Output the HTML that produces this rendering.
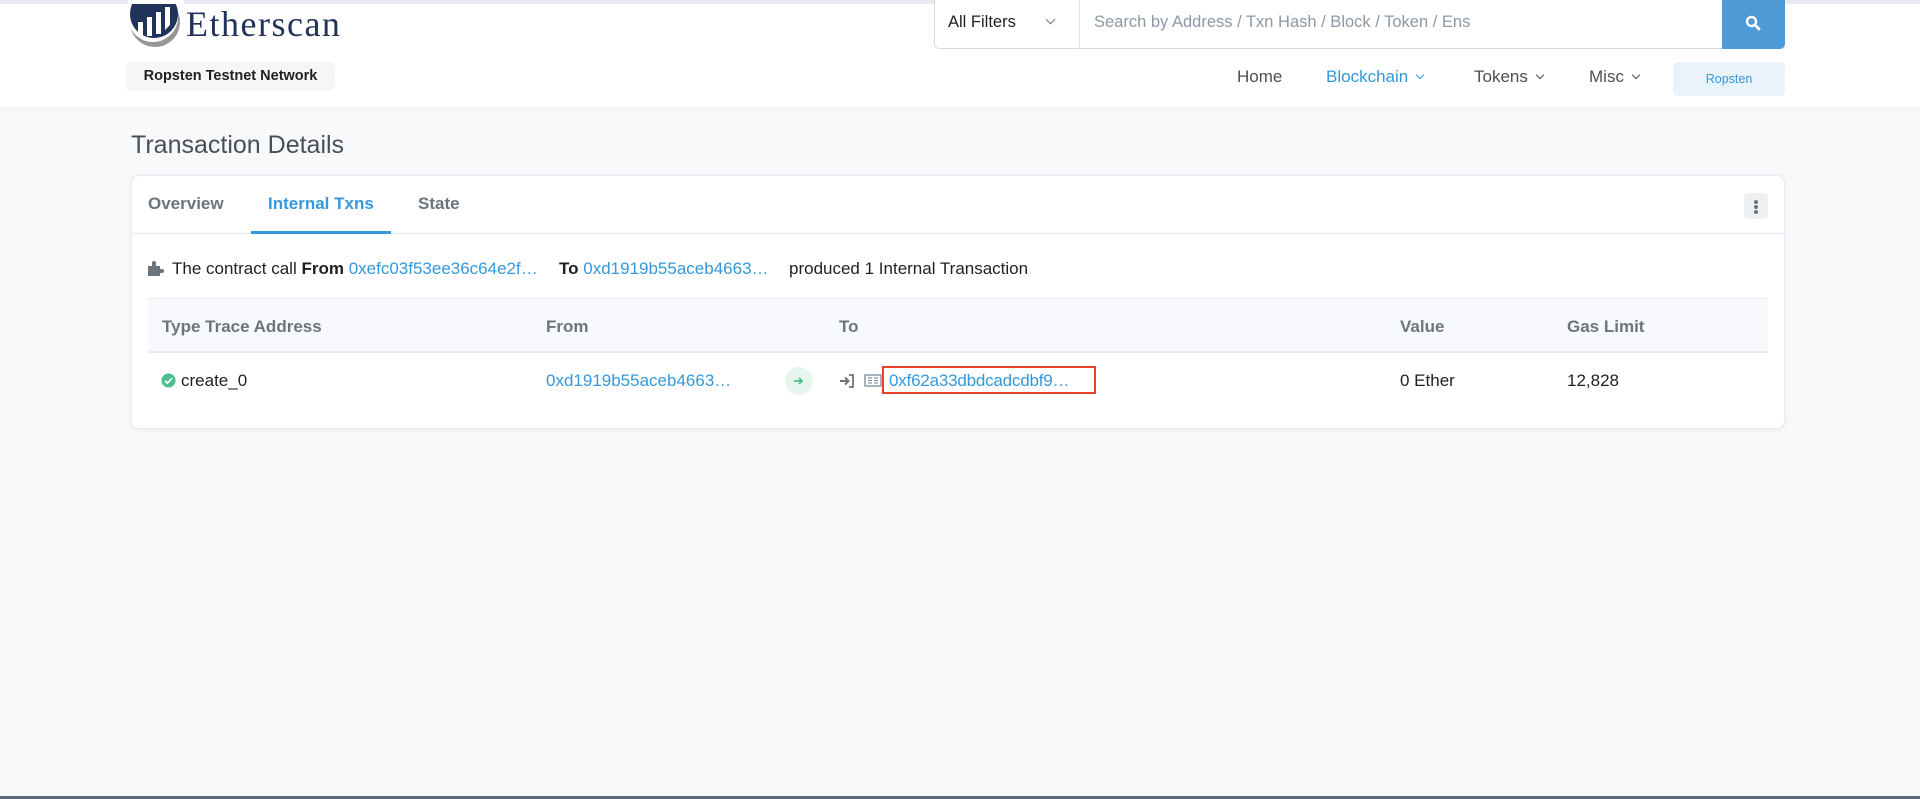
<!DOCTYPE html>
<html><head><meta charset="utf-8"><style>
*{box-sizing:border-box;margin:0;padding:0}
body{width:1920px;height:799px;overflow:hidden;background:#f8f9fa;font-family:"Liberation Sans",Arial,sans-serif;color:#1e2022;position:relative}
.a{position:absolute}
a,.lk{color:#3498db;text-decoration:none}
header{position:absolute;left:0;top:0;width:1920px;height:107px;background:#fff;border-top:4px solid #e7eaf0;box-shadow:0 1px 8px rgba(0,0,0,.04)}
.nav{font-size:17px;color:#4a4f55;top:67px}
.caret{display:inline-block;width:6px;height:6px;border-right:1.6px solid currentColor;border-bottom:1.6px solid currentColor;transform:rotate(45deg);margin-left:9px;position:relative;top:-4px}
.th{font-weight:bold;color:#6c757e;font-size:17px;top:317px}
.td{font-size:17px;top:371px}
</style></head><body>
<header></header>
<svg class="a" style="left:128px;top:0" width="56" height="50" viewBox="0 0 56 50">
<circle cx="27" cy="22" r="25" fill="#979695"/>
<circle cx="25" cy="17" r="25" fill="#fff"/>
<circle cx="26" cy="14" r="24" fill="#21325b"/>
<rect x="0" y="0" width="56" height="4" fill="#fff"/>
<rect x="10" y="22" width="5" height="14" fill="#fff"/><rect x="19" y="17" width="5" height="19" fill="#fff"/><rect x="28" y="12" width="5" height="22" fill="#fff"/><path d="M37 7h5v18l-5 5z" fill="#fff"/>
</svg>
<div class="a" style="left:186px;top:3px;font-family:'Liberation Serif',serif;font-size:36px;color:#21325b;letter-spacing:1.5px">Etherscan</div>
<div class="a" style="left:126px;top:62px;width:209px;height:29px;background:#f5f6f7;border-radius:5px;font-size:14.5px;font-weight:bold;color:#1e2022;line-height:29px;text-align:center">Ropsten Testnet Network</div>
<div class="a" style="left:934px;top:0;width:851px;height:49px;background:#fff;border:1px solid #d5dae2;border-top:none;border-radius:0 0 5px 5px"></div>
<div class="a" style="left:1079px;top:0;width:1px;height:49px;background:#e1e4e9"></div>
<div class="a" style="left:948px;top:13px;font-size:16.5px;color:#1e2022">All Filters</div>
<div class="a" style="left:1047px;top:16px;width:7px;height:7px;border-right:1.4px solid #777;border-bottom:1.4px solid #777;transform:rotate(45deg)"></div>
<div class="a" style="left:1094px;top:13px;font-size:16.5px;color:#8c98a4">Search by Address / Txn Hash / Block / Token / Ens</div>
<div class="a" style="left:1722px;top:0;width:63px;height:49px;background:#4e9ad6;border-radius:0 0 5px 0"></div>
<svg class="a" style="left:1745px;top:15px" width="16" height="16" viewBox="0 0 16 16"><circle cx="6.5" cy="6.5" r="4.5" fill="none" stroke="#fff" stroke-width="2.4"/><path d="M10 10l4 4" stroke="#fff" stroke-width="2.8" stroke-linecap="round"/></svg>
<div class="a nav" style="left:1237px">Home</div>
<div class="a nav" style="left:1326px;color:#3498db">Blockchain<span class="caret"></span></div>
<div class="a nav" style="left:1474px">Tokens<span class="caret"></span></div>
<div class="a nav" style="left:1589px">Misc<span class="caret"></span></div>
<div class="a" style="left:1685px;top:64px;width:1px;height:30px;background:#e7eaf0"></div>
<div class="a" style="left:1673px;top:62px;width:112px;height:34px;background:#eaf2fb;border-radius:5px;font-size:12.5px;color:#3498db;line-height:34px;text-align:center">Ropsten</div>
<div class="a" style="left:131px;top:131px;font-size:25px;color:#4a4f55">Transaction Details</div>
<div class="a" style="left:131px;top:175px;width:1654px;height:254px;background:#fff;border:1px solid #e7eaf3;border-radius:8px;box-shadow:0 1px 6px rgba(140,152,164,.12)"></div>
<div class="a" style="left:132px;top:233px;width:1652px;height:1px;background:#e7eaf3"></div>
<div class="a" style="left:148px;top:194px;font-size:17px;font-weight:bold;color:#6c757e">Overview</div>
<div class="a" style="left:268px;top:194px;font-size:17px;font-weight:bold;color:#3498db">Internal Txns</div>
<div class="a" style="left:418px;top:194px;font-size:17px;font-weight:bold;color:#6c757e">State</div>
<div class="a" style="left:251px;top:231px;width:140px;height:3px;background:#3498db"></div>
<div class="a" style="left:1744px;top:193px;width:24px;height:26px;background:#eef0f2;border-radius:4px"></div>
<div class="a" style="left:1754px;top:200px;width:4px;height:4px;border-radius:2px;background:#6c757e;box-shadow:0 5px 0 #6c757e,0 10px 0 #6c757e"></div>
<svg class="a" style="left:148px;top:261px" width="17" height="15" viewBox="0 0 17 15"><path d="M0 5h4V2a2 2 0 014 0v3h4v3h2a2 2 0 010 4h-2v3H0z" fill="#6c757e"/></svg>
<div class="a" style="left:172px;top:259px;font-size:17px;white-space:nowrap">The contract call <b>From</b> <span class="lk">0xefc03f53ee36c64e2f…</span></div>
<div class="a" style="left:559px;top:259px;font-size:17px;white-space:nowrap"><b>To</b> <span class="lk">0xd1919b55aceb4663…</span></div>
<div class="a" style="left:789px;top:259px;font-size:17px;white-space:nowrap">produced 1 Internal Transaction</div>
<div class="a" style="left:148px;top:298px;width:1620px;height:55px;background:#f8f9fd;border-top:1px solid #e7eaf3;border-bottom:2px solid #e7eaf3"></div>
<div class="a th" style="left:162px">Type Trace Address</div>
<div class="a th" style="left:546px">From</div>
<div class="a th" style="left:839px">To</div>
<div class="a th" style="left:1400px">Value</div>
<div class="a th" style="left:1567px">Gas Limit</div>
<svg class="a" style="left:161px;top:373px" width="15" height="15" viewBox="0 0 15 15"><circle cx="7.5" cy="7.5" r="7" fill="#4cbf8c"/><path d="M4 7.8l2.4 2.3L11 5.3" fill="none" stroke="#fff" stroke-width="1.8"/></svg>
<div class="a td" style="left:181px">create_0</div>
<div class="a td lk" style="left:546px">0xd1919b55aceb4663…</div>
<div class="a" style="left:785px;top:367px;width:28px;height:28px;border-radius:14px;background:#e6f6ef"></div>
<svg class="a" style="left:793px;top:376px" width="12" height="10" viewBox="0 0 12 10"><path d="M1 5h8M6 2l3 3-3 3" fill="none" stroke="#4cbf8c" stroke-width="1.8"/></svg>
<svg class="a" style="left:839px;top:374px" width="16" height="14" viewBox="0 0 16 14"><path d="M1 7h8M6 3.5L9.5 7 6 10.5" fill="none" stroke="#6c757e" stroke-width="2"/><path d="M10 1h4v12h-4" fill="none" stroke="#6c757e" stroke-width="1.8"/></svg>
<svg class="a" style="left:864px;top:374px" width="18" height="13" viewBox="0 0 18 13"><rect x="1" y="1" width="16" height="11" fill="none" stroke="#8c98a4" stroke-width="1.5"/><path d="M4 4h4M4 6.5h4M4 9h4M10 4h4M10 6.5h4M10 9h4" stroke="#8c98a4" stroke-width="1.2"/></svg>
<div class="a" style="left:882px;top:366px;width:214px;height:28px;border:2.5px solid #e8402a"></div>
<div class="a td lk" style="left:889px;letter-spacing:-0.2px">0xf62a33dbdcadcdbf9…</div>
<div class="a td" style="left:1400px">0 Ether</div>
<div class="a td" style="left:1567px">12,828</div>
<div class="a" style="left:0;top:796px;width:1920px;height:3px;background:#5b6b7c"></div>
</body></html>
